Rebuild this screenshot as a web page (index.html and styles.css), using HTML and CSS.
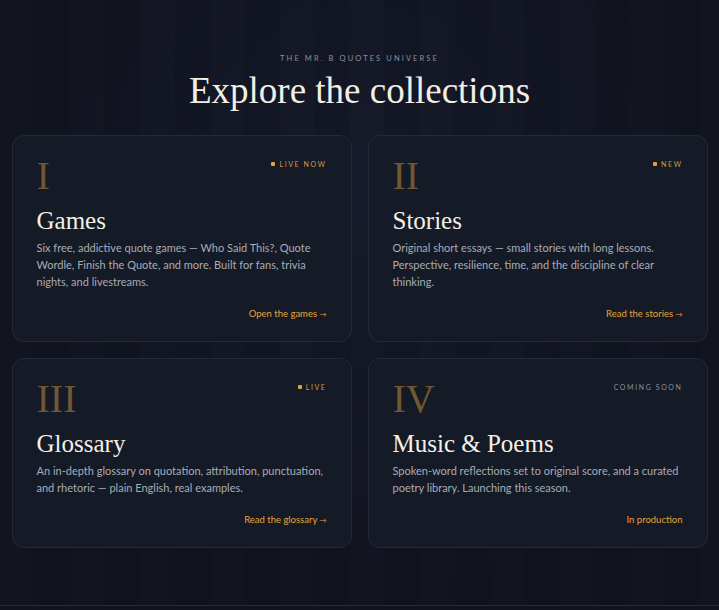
FILE: index.html
```html
<!DOCTYPE html>
<html lang="en">
<head>
<meta charset="utf-8">
<title>Explore the collections</title>
<link rel="stylesheet" href="styles.css">
</head>
<body>
<section class="universe">
  <p class="eyebrow">The Mr. B Quotes Universe</p>
  <h1 class="heading">Explore the collections</h1>
  <div class="grid">
    <article class="card">
      <div class="card-top">
        <span class="numeral">I</span>
        <span class="badge"><span class="dot"></span>Live now</span>
      </div>
      <h2 class="title">Games</h2>
      <p class="desc">Six free, addictive quote games — Who Said This?, Quote Wordle, Finish the Quote, and more. Built for fans, trivia nights, and livestreams.</p>
      <a class="link" href="#">Open the games <span class="arrow">→</span></a>
    </article>
    <article class="card">
      <div class="card-top">
        <span class="numeral">II</span>
        <span class="badge"><span class="dot"></span>New</span>
      </div>
      <h2 class="title">Stories</h2>
      <p class="desc">Original short essays — small stories with long lessons. Perspective, resilience, time, and the discipline of clear thinking.</p>
      <a class="link" href="#">Read the stories <span class="arrow">→</span></a>
    </article>
    <article class="card">
      <div class="card-top">
        <span class="numeral">III</span>
        <span class="badge"><span class="dot"></span>Live</span>
      </div>
      <h2 class="title">Glossary</h2>
      <p class="desc">An in-depth glossary on quotation, attribution, punctuation, and rhetoric — plain English, real examples.</p>
      <a class="link" href="#">Read the glossary <span class="arrow">→</span></a>
    </article>
    <article class="card">
      <div class="card-top">
        <span class="numeral">IV</span>
        <span class="badge badge-muted">Coming soon</span>
      </div>
      <h2 class="title">Music &amp; Poems</h2>
      <p class="desc">Spoken-word reflections set to original score, and a curated poetry library. Launching this season.</p>
      <span class="link">In production</span>
    </article>
  </div>
</section>
</body>
</html>
```

FILE: styles.css
```css
html, body {
  margin: 0;
  padding: 0;
}
body {
  background: #10131e;
  font-family: "Lato", "Liberation Sans", sans-serif;
  color: #a6a9b1;
}
.universe {
  min-height: 606px;
  box-sizing: border-box;
  border-bottom: 1px solid #262b3a;
  padding: 54px 0 0;
  background:
    repeating-linear-gradient(90deg,
      rgba(255,255,255,0.006) 0px, rgba(255,255,255,0.006) 34px,
      rgba(0,0,0,0.025) 34px, rgba(0,0,0,0.025) 70px),
    radial-gradient(ellipse at 50% 30%, #141828 0%, #10131e 70%);
}
.eyebrow {
  margin: 0;
  text-align: center;
  font-size: 7.5px;
  letter-spacing: 2.1px;
  text-transform: uppercase;
  color: #8b909c;
}
.heading {
  margin: 6px 0 22px;
  text-align: center;
  font-family: "Liberation Serif", serif;
  font-weight: 400;
  font-size: 37px;
  line-height: 44px;
  color: #f3eee4;
}
.grid {
  width: 696px;
  margin: 0 auto;
  display: grid;
  grid-template-columns: 1fr 1fr;
  gap: 16px;
}
.card {
  background: #151a27;
  border: 1px solid #252a38;
  border-radius: 12px;
  padding: 20px 24px 20px;
  display: flex;
  flex-direction: column;
}
.card-top {
  display: flex;
  justify-content: space-between;
  align-items: flex-start;
}
.numeral {
  font-family: "Liberation Serif", serif;
  font-size: 40px;
  line-height: 40px;
  color: #725733;
}
.badge {
  display: flex;
  align-items: center;
  gap: 4px;
  margin-top: 4px;
  font-size: 7px;
  letter-spacing: 1.6px;
  text-transform: uppercase;
  color: #d49a3e;
}
.badge-muted {
  color: #8b909c;
}
.dot {
  width: 4px;
  height: 4px;
  border-radius: 1px;
  background: #e3a23a;
}
.title {
  margin: 10px 0 0;
  font-family: "Liberation Serif", serif;
  font-weight: 400;
  font-size: 25px;
  line-height: 30px;
  color: #f4f0e8;
}
.desc {
  margin: 3px 0 0;
  font-size: 11px;
  line-height: 17px;
  color: #a9acb4;
}
.link {
  align-self: flex-end;
  margin-top: 17px;
  font-size: 9.5px;
  line-height: 14px;
  color: #e3a53c;
  text-decoration: none;
}
.arrow {
  font-size: 7px;
}
```
